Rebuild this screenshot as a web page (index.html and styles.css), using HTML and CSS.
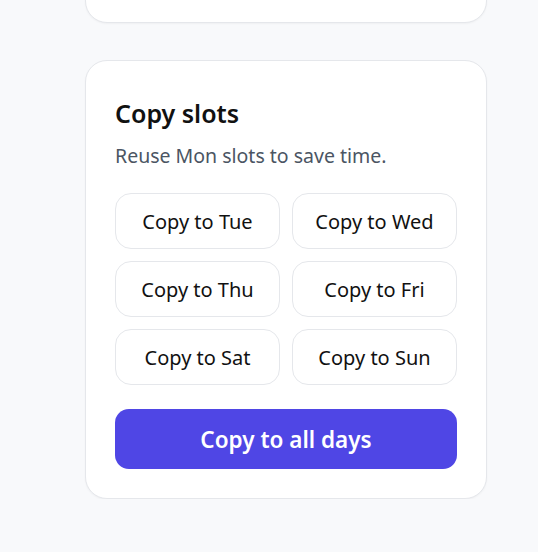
FILE: index.html
```html
<!DOCTYPE html>
<html lang="en">
<head>
<meta charset="utf-8">
<link rel="stylesheet" href="styles.css">
</head>
<body>
<div class="page">
  <div class="card card-prev"></div>
  <section class="card card-copy">
    <h2 class="title">Copy slots</h2>
    <p class="subtitle">Reuse Mon slots to save time.</p>
    <div class="grid">
      <button class="day-btn">Copy to Tue</button>
      <button class="day-btn">Copy to Wed</button>
      <button class="day-btn">Copy to Thu</button>
      <button class="day-btn">Copy to Fri</button>
      <button class="day-btn">Copy to Sat</button>
      <button class="day-btn">Copy to Sun</button>
    </div>
    <button class="all-btn">Copy to all days</button>
  </section>
</div>
</body>
</html>
```
FILE: styles.css
```css
html, body {
  margin: 0;
  padding: 0;
  background: #f8f9fb;
  font-family: "Noto Sans", "Open Sans", sans-serif;
}
.page {
  width: 402px;
  margin-left: 85px;
  display: flex;
  flex-direction: column;
  gap: 37px;
}
.card {
  box-sizing: border-box;
  background: #ffffff;
  border: 1px solid #e5e7eb;
  border-radius: 22px;
  box-shadow: 0 1px 2px rgba(0, 0, 0, 0.04);
}
.card-prev {
  height: 123px;
  margin-top: -100px;
}
.card-copy {
  padding: 29px;
  height: 439px;
}
.title {
  margin: 8px 0 0 0;
  font-size: 25px;
  font-weight: 600;
  line-height: 30px;
  color: #111111;
}
.subtitle {
  margin: 15px 0 0 0;
  font-size: 19.5px;
  line-height: 26px;
  color: #4b5563;
}
.grid {
  margin-top: 24px;
  display: grid;
  grid-template-columns: 1fr 1fr;
  gap: 12px;
}
.day-btn {
  height: 56px;
  background: #ffffff;
  border: 1px solid #e5e7eb;
  border-radius: 16px;
  font-family: inherit;
  font-size: 20px;
  color: #111111;
  padding: 0;
}
.all-btn {
  margin-top: 24px;
  width: 100%;
  height: 60px;
  background: #4f46e5;
  border: none;
  border-radius: 14px;
  color: #ffffff;
  font-family: inherit;
  font-size: 22.5px;
  font-weight: 600;
  padding: 0;
}
```
